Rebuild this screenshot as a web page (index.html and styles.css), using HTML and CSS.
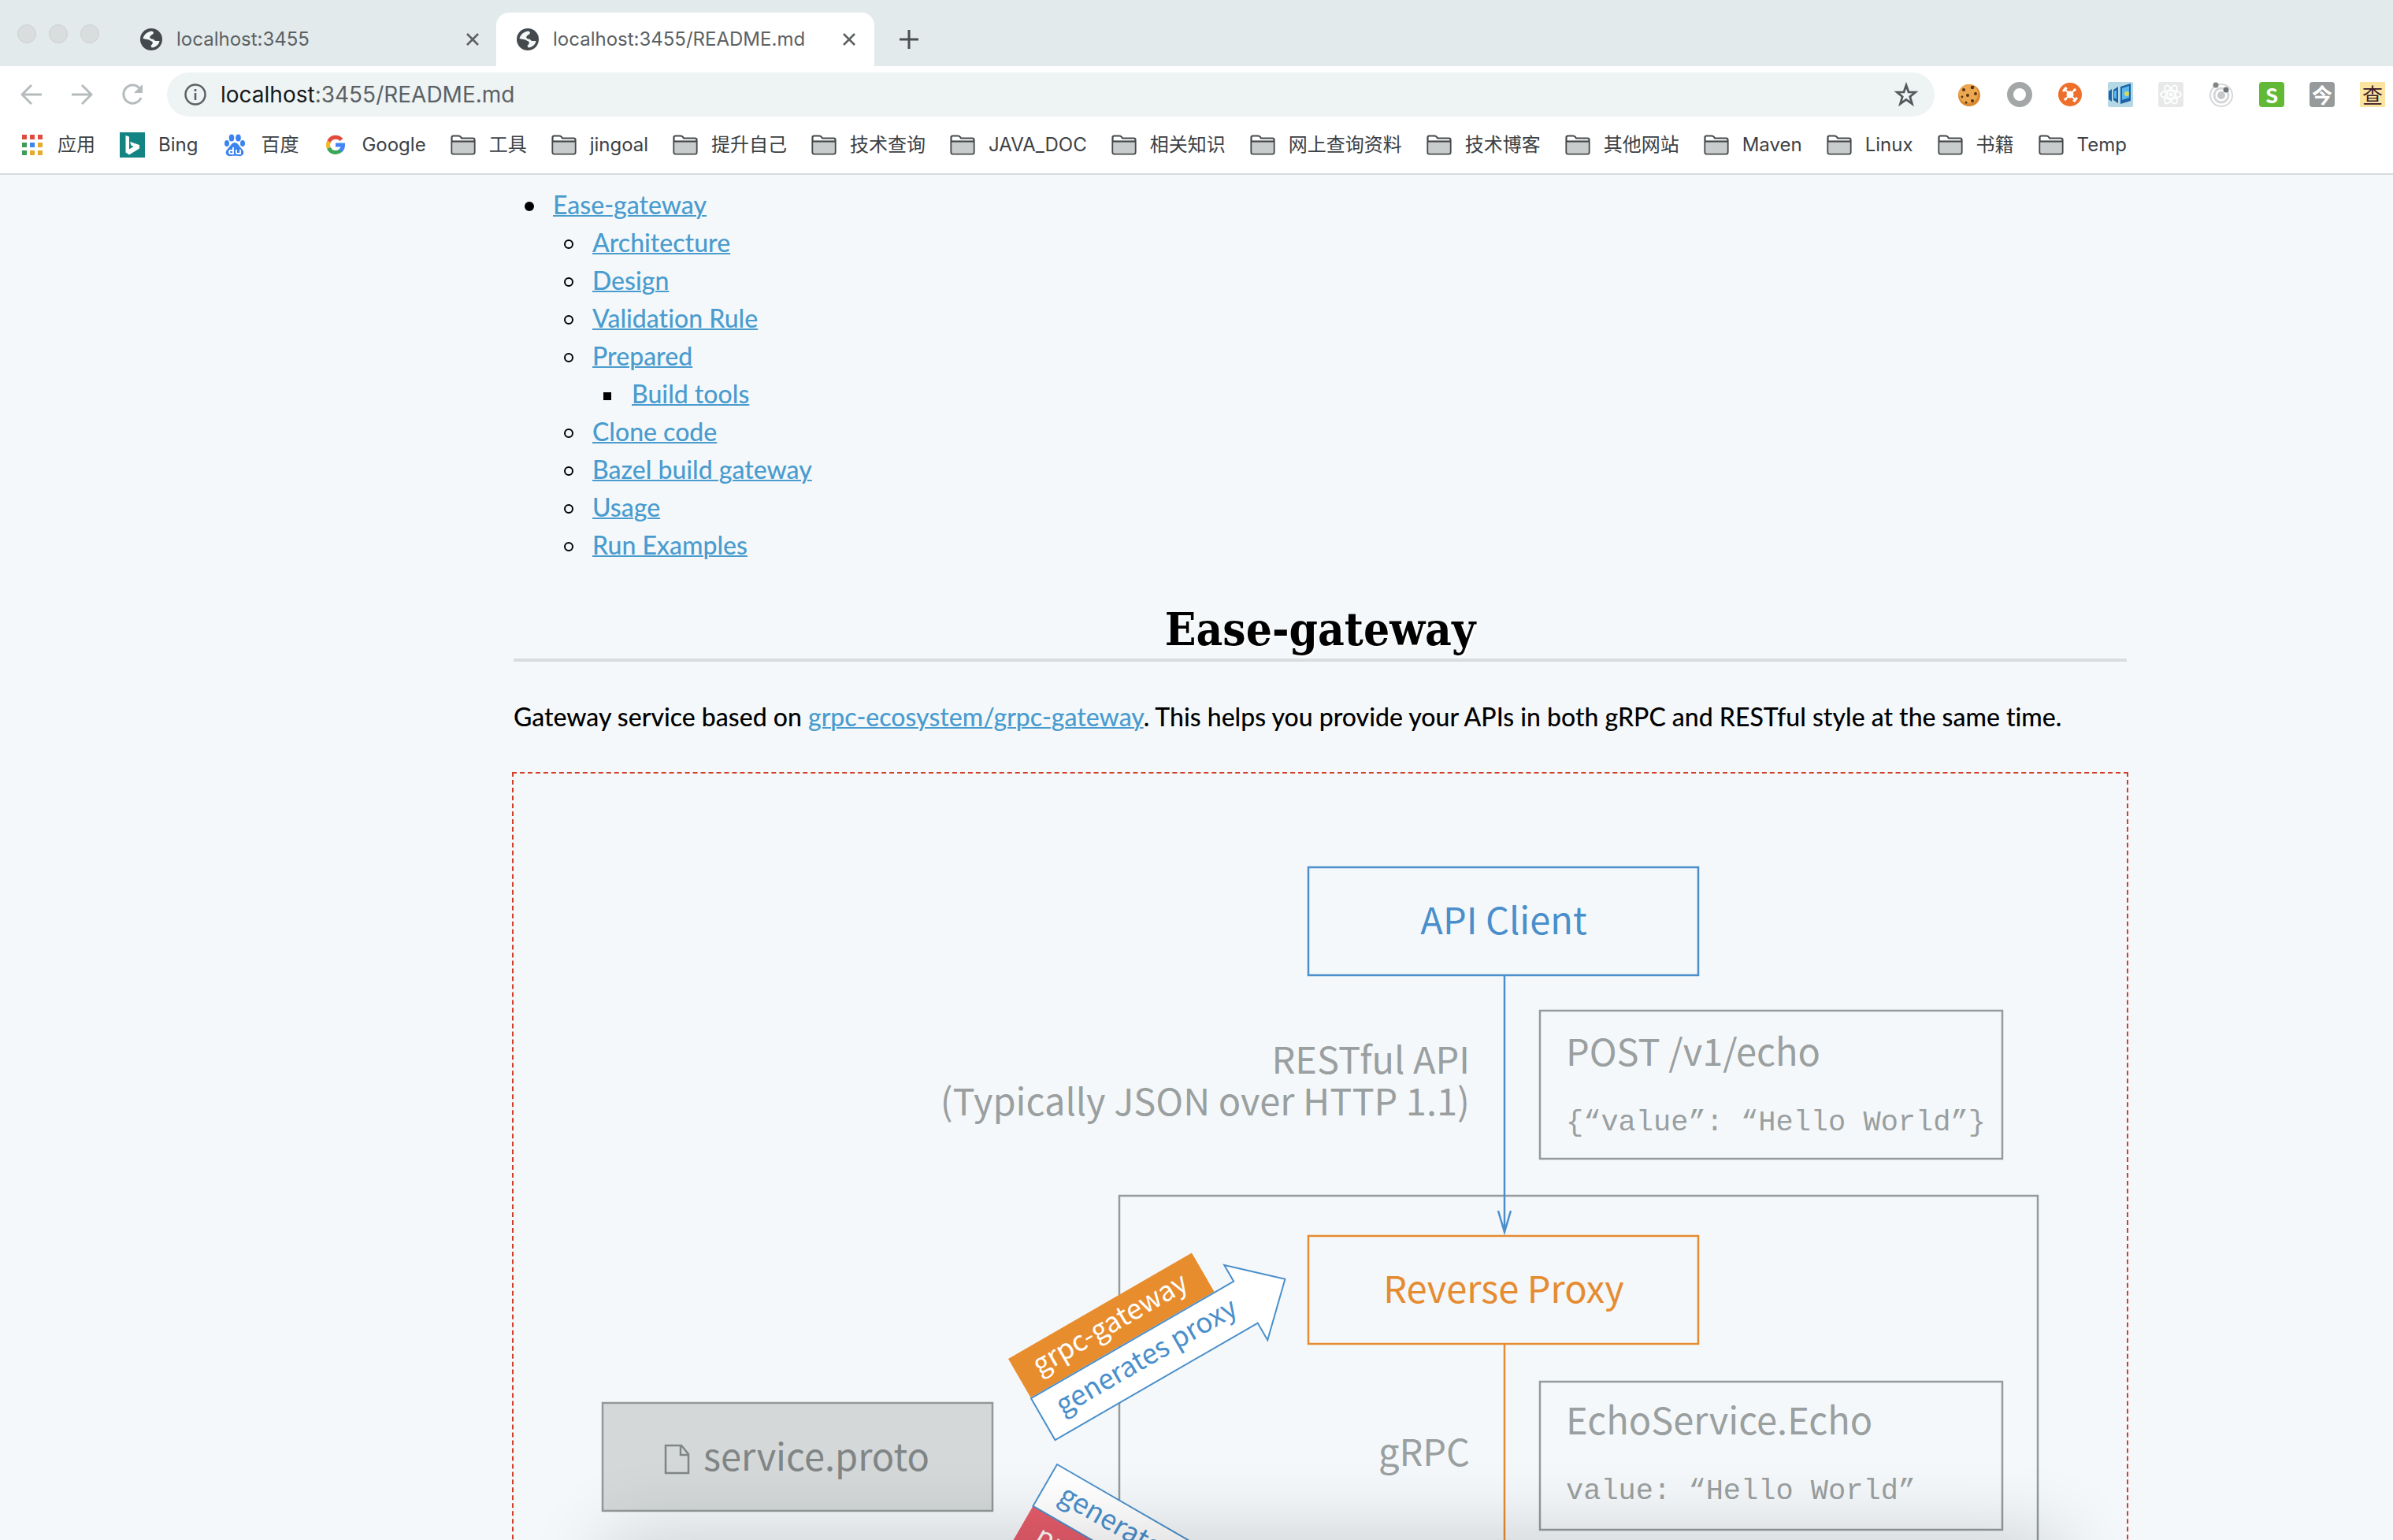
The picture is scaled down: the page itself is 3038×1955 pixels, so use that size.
FILE: index.html
```html
<!DOCTYPE html>
<html lang="zh-CN">
<head>
<meta charset="utf-8">
<title>localhost:3455/README.md</title>
<link rel="stylesheet" href="styles.css">
</head>
<body>
<svg class="defs" aria-hidden="true">
  <symbol id="globe" viewBox="0 0 28 28"><circle cx="14" cy="14" r="14" fill="#43494d"/><path d="M3.500 13C4.500 8 9 4 15 3.500L17 5C17 7.500 15 8 13.500 9L12 11L13 13L17 14Q18 16 20 16H24.500C24 20 20 24.500 14.500 24.500L13.500 21.500Q16.500 20 15.500 17Q13 15.500 11 14.500Z" fill="#f4f7f7"/></symbol>
  <symbol id="cross" viewBox="0 0 16 16"><path d="M1 1l14 14M15 1L1 15" fill="none" stroke="#5c6164" stroke-width="2.6"/></symbol>
  <symbol id="folder" viewBox="0 0 32 26"><path d="M1.5 22V3.500Q1.500 1.500 3.500 1.500H10Q12 1.500 13 3L14 4.500H28.500Q30.500 4.500 30.500 6.500V22Q30.500 24.500 28.500 24.500H3.500Q1.500 24.500 1.500 22Z" fill="#fff" stroke="#45494b" stroke-width="2.200"/><path d="M2.500 9H29.500V23.400H2.500Z" fill="#c9cccd"/><path d="M1.500 8.500H30.500" stroke="#45494b" stroke-width="2.200"/></symbol>
</svg>
<header class="browser">
  <div class="tabs">
    <div class="lights"><i></i><i></i><i></i></div>
    <div class="tab"><svg class="fav"><use href="#globe"/></svg><span>localhost:3455</span><button aria-label="Close tab"><svg><use href="#cross"/></svg></button></div>
    <div class="tab active"><svg class="fav"><use href="#globe"/></svg><span>localhost:3455/README.md</span><button aria-label="Close tab"><svg><use href="#cross"/></svg></button></div>
    <button class="plus" aria-label="New tab"><svg viewBox="0 0 24 24"><path d="M12 0V24M0 12H24" stroke="#4a4f52" stroke-width="3"/></svg></button>
  </div>
  <div class="toolbar">
    <button aria-label="Back"><svg viewBox="0 0 28 28"><path d="M27 14H3M14 2L2 14L14 26" fill="none" stroke="#b6bbbd" stroke-width="3"/></svg></button>
    <button aria-label="Forward"><svg viewBox="0 0 28 28"><path d="M1 14H25M14 2L26 14L14 26" fill="none" stroke="#b6bbbd" stroke-width="3"/></svg></button>
    <button aria-label="Reload"><svg viewBox="0 0 28 28"><path d="M23 6A11.500 11.500 0 1 0 25 18" fill="none" stroke="#b6bbbd" stroke-width="3"/><path d="M27 1V12H16Z" fill="#b6bbbd"/></svg></button>
    <div class="address">
      <svg class="info" viewBox="0 0 28 28"><circle cx="14" cy="14" r="12.500" fill="none" stroke="#5c6164" stroke-width="2.500"/><path d="M14 12V21M14 7V10" stroke="#5c6164" stroke-width="2.600"/></svg>
      <a class="url" href="#"><b>localhost</b>:3455/README.md</a>
      <button aria-label="Bookmark this page"><svg viewBox="0 0 30 30"><path d="M15 4L17.800 12L26 12.300L19.500 17.500L22 26L15 21L8 26L10.500 17.500L4 12.300L12.200 12Z" fill="none" stroke="#54595c" stroke-width="2.600"/></svg></button>
    </div>
    <div class="extensions">
      <button aria-label="Cookies"><svg viewBox="0 0 32 32"><circle cx="16" cy="17" r="14" fill="#d98a30"/><circle cx="15" cy="15" r="12" fill="#eba850"/><g fill="#5a3214"><circle cx="9" cy="10" r="2"/><circle cx="20" cy="7" r="2.300"/><circle cx="14" cy="17" r="2"/><circle cx="24" cy="15" r="2"/><circle cx="7" cy="19" r="1.400"/><circle cx="20" cy="24" r="2"/><circle cx="12" cy="26" r="1.500"/></g></svg></button>
      <button aria-label="Recorder"><svg viewBox="0 0 32 32"><circle cx="16" cy="16" r="12" fill="none" stroke="#a4a7a8" stroke-width="8"/></svg></button>
      <button aria-label="Drone"><svg viewBox="0 0 32 32"><circle cx="16" cy="16" r="15" fill="#ee6f2a"/><path d="M9 9L23 23M22 10L10 22" stroke="#fff" stroke-width="2"/><path d="M6 11L10 6L13 8L8 13ZM19 24L24 19L26 21L22 26Z" fill="#fff"/><circle cx="16" cy="16" r="4.500" fill="#fff"/><circle cx="22" cy="10" r="1.800" fill="#fff"/><circle cx="10" cy="22" r="1.800" fill="#fff"/></svg></button>
      <button aria-label="Windows"><svg viewBox="0 0 32 32"><rect width="32" height="32" rx="2" fill="#b4d8e4"/><path d="M1 12L5 9V25L1 22ZM7 10L13 6V27L7 23ZM16 6L29 2V24L16 28Z" fill="#1d62a8"/><path d="M8 12L11 10V22L8 20ZM18 8L27 5V20L18 23Z" fill="#58b8ec"/><circle cx="24" cy="15" r="3" fill="#d9d860"/></svg></button>
      <button aria-label="React"><svg viewBox="0 0 32 32"><rect width="32" height="32" rx="3" fill="#e7e9e9"/><g fill="none" stroke="#fff" stroke-width="1.800"><ellipse cx="16" cy="16" rx="13" ry="5"/><ellipse cx="16" cy="16" rx="13" ry="5" transform="rotate(60 16 16)"/><ellipse cx="16" cy="16" rx="13" ry="5" transform="rotate(120 16 16)"/></g><circle cx="16" cy="16" r="2.500" fill="#fff"/></svg></button>
      <button aria-label="Orbit"><svg viewBox="0 0 32 32"><g fill="none" stroke="#d5d7d8"><circle cx="16" cy="17" r="14" stroke-width="2"/><circle cx="16" cy="17" r="9" stroke-width="3"/></g><circle cx="16" cy="17" r="5" fill="#c6c9ca"/><circle cx="9" cy="4" r="3.500" fill="#808486"/><circle cx="22" cy="10" r="3.500" fill="#707476"/></svg></button>
      <button class="badge green" aria-label="S">S</button>
      <button class="badge grey" aria-label="今">今</button>
      <button class="badge cream" aria-label="查">查</button>
    </div>
  </div>
  <nav class="bookmarks">
    <a href="#"><svg class="apps" viewBox="0 0 28 26"><path d="M0 0h6v6H0zM10 0h6v6h-6zM20 0h6v6h-6z" fill="#df4b3e"/><path d="M0 10h6v6H0z" fill="#3d9c5a"/><path d="M10 10h6v6h-6z" fill="#3f85ee"/><path d="M20 10h6v6h-6zM10 20h6v6h-6zM20 20h6v6h-6z" fill="#e5ab2a"/><path d="M0 20h6v6H0z" fill="#3d9c5a"/></svg>应用</a>
    <a href="#"><svg class="logo" viewBox="0 0 32 32"><rect width="32" height="32" fill="#128484"/><path d="M7.500 4L12 5.500V21.500L17.500 18L14.500 16.500L13 12L25 16V20.500L12 28.500L7.500 25.500Z" fill="#fff"/></svg>Bing</a>
    <a href="#"><svg class="logo" viewBox="0 0 32 32"><g fill="#3b83ee"><ellipse cx="12" cy="7" rx="3.300" ry="4.500"/><ellipse cx="20.500" cy="7" rx="3.300" ry="4.500"/><ellipse cx="6" cy="14" rx="3" ry="4"/><ellipse cx="26" cy="14" rx="3" ry="4"/><path d="M16 13C20 13 21 17 25 21C30 26 26 31 21 30C18 29.500 14 29.500 11 30C6 31 2 26 7 21C11 17 12 13 16 13Z"/></g><path d="M14 19V27H11Q9 27 9 25T11 23H14M18 22V26Q18 27 20 27H23V22" fill="none" stroke="#fff" stroke-width="1.800"/></svg>百度</a>
    <a href="#"><svg class="logo" viewBox="0 0 32 32"><g fill="none" stroke-width="5"><path d="M23.500 9.500A9.500 9.500 0 0 0 7.500 12" stroke="#e14a3d"/><path d="M7.600 11.500A9.500 9.500 0 0 0 7.600 20.500" stroke="#f2b92e"/><path d="M7.400 20A9.500 9.500 0 0 0 22.500 23" stroke="#3aa757"/><path d="M22 23.500A9.500 9.500 0 0 0 25.500 16H16" stroke="#4285f4"/></g></svg>Google</a>
    <a href="#"><svg class="folder"><use href="#folder"/></svg>工具</a>
    <a href="#"><svg class="folder"><use href="#folder"/></svg>jingoal</a>
    <a href="#"><svg class="folder"><use href="#folder"/></svg>提升自己</a>
    <a href="#"><svg class="folder"><use href="#folder"/></svg>技术查询</a>
    <a href="#"><svg class="folder"><use href="#folder"/></svg>JAVA_DOC</a>
    <a href="#"><svg class="folder"><use href="#folder"/></svg>相关知识</a>
    <a href="#"><svg class="folder"><use href="#folder"/></svg>网上查询资料</a>
    <a href="#"><svg class="folder"><use href="#folder"/></svg>技术博客</a>
    <a href="#"><svg class="folder"><use href="#folder"/></svg>其他网站</a>
    <a href="#"><svg class="folder"><use href="#folder"/></svg>Maven</a>
    <a href="#"><svg class="folder"><use href="#folder"/></svg>Linux</a>
    <a href="#"><svg class="folder"><use href="#folder"/></svg>书籍</a>
    <a href="#"><svg class="folder"><use href="#folder"/></svg>Temp</a>
  </nav>
</header>
<main>
  <article>
    <ul>
      <li><a href="#">Ease-gateway</a>
        <ul>
          <li><a href="#">Architecture</a></li>
          <li><a href="#">Design</a></li>
          <li><a href="#">Validation Rule</a></li>
          <li><a href="#">Prepared</a>
            <ul><li><a href="#">Build tools</a></li></ul>
          </li>
          <li><a href="#">Clone code</a></li>
          <li><a href="#">Bazel build gateway</a></li>
          <li><a href="#">Usage</a></li>
          <li><a href="#">Run Examples</a></li>
        </ul>
      </li>
    </ul>
    <h1>Ease-gateway</h1>
    <p>Gateway service based on <a href="#">grpc-ecosystem/grpc-gateway</a>. This helps you provide your APIs in both gRPC and RESTful style at the same time.</p>
    <figure>
      <svg class="diagram" viewBox="652 982 2048 1100" role="img" aria-label="gRPC gateway architecture">
        <g fill="none" stroke-width="2.500">
          <path d="M1421 2082V1518H2587V2082" stroke="#959a9b"/>
          <rect x="1955" y="1283" width="587" height="188" stroke="#959a9b"/>
          <rect x="1955" y="1754" width="587" height="188" stroke="#959a9b"/>
          <rect x="1661" y="1101" width="495" height="137" stroke="#4a8fcb"/>
          <path d="M1910 1238V1564M1902 1537L1910 1564L1918 1537" stroke="#4a8fcb"/>
          <rect x="1661" y="1569" width="495" height="137" stroke="#e58c32"/>
          <path d="M1910 1706V1982M1902 1955L1910 1982L1918 1955" stroke="#e58c32"/>
          <rect x="765" y="1781" width="495" height="137" fill="#d5d8d9" stroke="#939899"/>
          <path d="M845 1835H865L874 1846V1870H845ZM864 1835V1847H874" stroke="#808586"/>
        </g>
        <g class="label">
          <text x="1909" y="1186" text-anchor="middle" fill="#4a8fcb">API Client</text>
          <text x="1909" y="1654" text-anchor="middle" fill="#e58c32">Reverse Proxy</text>
          <text x="1866" y="1363" text-anchor="end">RESTful API</text>
          <text x="1866" y="1416" text-anchor="end">(Typically JSON over HTTP 1.1)</text>
          <text x="1866" y="1861" text-anchor="end">gRPC</text>
          <text x="1988" y="1353">POST /v1/echo</text>
          <text x="1988" y="1821">EchoService.Echo</text>
          <text x="893" y="1867" fill="#808586">service.proto</text>
        </g>
        <g class="mono">
          <text x="1988" y="1435">{“value”: “Hello World”}</text>
          <text x="1988" y="1903">value: “Hello World”</text>
        </g>
        <g class="ribbon" transform="translate(1280 1725) rotate(-30)">
          <path d="M0 0H269V57H0Z" fill="#e88d2e"/>
          <path d="M0 58H297V34L355 88L297 144V119H0Z" fill="#fff" stroke="#4a8fcb" stroke-width="2"/>
          <text x="24" y="38" fill="#fff">grpc-gateway</text>
          <text x="24" y="97" fill="#4a8fcb">generates proxy</text>
        </g>
        <g class="ribbon" transform="translate(1342 1859) rotate(30)">
          <path d="M0 61H269V119H0Z" fill="#e65c6b"/>
          <path d="M0 0H297V-24L355 30L297 84V61H0Z" fill="#fff" stroke="#4a8fcb" stroke-width="2"/>
          <text x="23" y="40" fill="#4a8fcb">generates stub</text>
          <text x="23" y="100" fill="#fff">protoc</text>
        </g>
      </svg>
    </figure>
  </article>
</main>
<div class="dock"></div>
</body>
</html>
```
FILE: styles.css
```css
*, *::before { box-sizing: border-box; }
body { margin: 0; height: 100vh; overflow: hidden; display: flex; flex-direction: column; background: #f5f8fa; color: #000; font: 500 32px/48px Lato, sans-serif; font-variant-ligatures: none; }
button { border: 0; padding: 0; background: none; display: flex; align-items: center; justify-content: center; }
.defs { display: none; }
.browser { flex: none; background: #fff; border-bottom: 2px solid #d6dbdc; font: 24px/32px Inter, "Noto Sans CJK SC", sans-serif; color: #3c4144; }
.tabs { height: 84px; padding: 16px 0 0 22px; display: flex; background: #e2eaec; }
.lights { display: flex; gap: 16px; width: 128px; padding-top: 15px; }
.lights i { width: 24px; height: 24px; border-radius: 50%; background: #d9dddd; border: 1px solid #ccd0d0; }
.tab { width: 480px; display: flex; align-items: center; padding: 0 22px 0 28px; color: #5c6164; }
.tab.active { background: #fff; border-radius: 16px 16px 0 0; padding: 0 24px 0 26px; }
.tab span { flex: 1; padding-left: 18px; }
.tab button svg { width: 16px; height: 16px; }
.fav { width: 28px; height: 28px; }
.plus { margin-left: 32px; }
.plus svg { width: 24px; height: 24px; }
.toolbar { display: flex; align-items: center; padding: 8px 10px 8px 24px; }
.toolbar > button { width: 32px; margin-right: 32px; }
.toolbar > button svg { width: 28px; height: 28px; }
.toolbar > button:nth-of-type(3) { margin-right: 28px; }
.address { flex: 1; height: 56px; border-radius: 28px; background: #eef3f4; display: flex; align-items: center; padding: 0 20px 0 22px; }
.info { width: 28px; height: 28px; }
.url { flex: 1; padding-left: 18px; font-size: 28px; color: #5c6164; text-decoration: none; }
.url b { font-weight: 400; color: #15191b; }
.address button svg { width: 32px; height: 32px; }
.extensions { display: flex; gap: 32px; padding-left: 28px; }
.extensions button, .extensions svg { width: 32px; height: 32px; }
.badge { border-radius: 4px; color: #fff; font: 700 26px/32px "Noto Sans CJK SC", sans-serif; }
.green { background: #62b936; }
.grey { background: #969a9b; }
.cream { background: #fae4a0; border-radius: 0; color: #3a1a2a; font-weight: 400; }
.bookmarks { display: flex; align-items: center; height: 64px; padding: 0 28px 8px; gap: 31px; }
.bookmarks a { display: flex; align-items: center; gap: 17px; color: #3c4144; text-decoration: none; white-space: nowrap; }
.apps { width: 28px; height: 26px; }
.logo { width: 32px; height: 32px; }
.folder { width: 32px; height: 26px; }
main { flex: 1; min-height: 0; overflow: hidden; padding: 14px 336px 0 650px; }
article a { color: #4a9ccf; text-decoration: underline; text-decoration-thickness: 2px; }
ul { margin: 0; padding-left: 50px; list-style: none; }
article > ul { padding-left: 52px; }
li::before { content: ""; display: inline-block; width: 12px; height: 12px; margin: 0 24px 4px -36px; border-radius: 50%; background: #000; }
ul ul li::before { background: none; border: 2px solid #000; }
ul ul ul li::before { width: 10px; height: 10px; margin-right: 26px; border-radius: 0; background: #000; }
h1 { margin: 46px 2px; border-bottom: 4px solid #d9dddf; text-align: center; font: 700 58px/74px "DejaVu Serif Condensed", "DejaVu Serif", serif; text-shadow: 2px 2px 1px #fff; }
p { margin: 0 2px 46px; }
figure { margin: 0; border: 2px dashed #d04028; }
.diagram { display: block; width: 100%; }
.label { font: 47px "Noto Sans CJK SC", sans-serif; font-variant-ligatures: normal; fill: #9a9fa0; }
.mono { font: 37px "Liberation Mono", monospace; fill: #9a9fa0; }
.ribbon { font: 35px "Noto Sans CJK SC", sans-serif; }
.dock { position: fixed; top: 100vh; left: 770px; right: 420px; height: 80px; box-shadow: 0 0 100px rgba(0,0,0,.2); }
```
